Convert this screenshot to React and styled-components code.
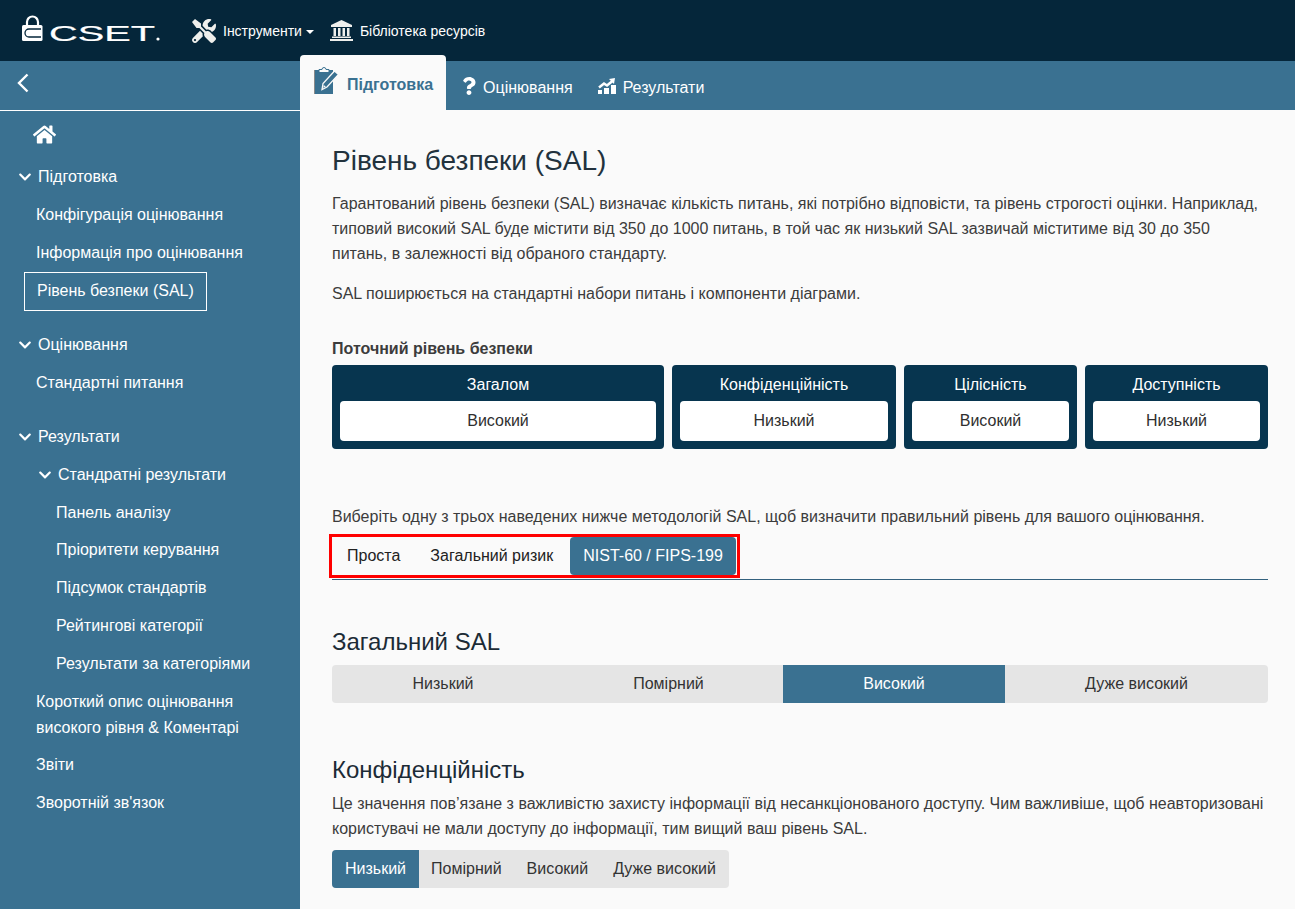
import React from "react";
import styled, { createGlobalStyle } from "styled-components";
import { FaTools, FaQuestion, FaHome, FaChevronDown } from "react-icons/fa";

const GlobalStyle = createGlobalStyle`
  html, body {
    margin: 0;
    padding: 0;
    background: #fafafa;
    font-family: "Liberation Sans", Arial, sans-serif;
    font-size: 16px;
    color: #3c3c3c;
  }
  * {
    box-sizing: border-box;
  }
`;

const navGroups = [
  {
    title: "Підготовка",
    items: [
      { label: "Конфігурація оцінювання" },
      { label: "Інформація про оцінювання" },
      { label: "Рівень безпеки (SAL)", active: true },
    ],
  },
  {
    title: "Оцінювання",
    items: [{ label: "Стандартні питання" }],
  },
];

const resultItems = ["Панель аналізу", "Пріоритети керування", "Підсумок стандартів", "Рейтингові категорії", "Результати за категоріями"];

const levels = [
  { title: "Загалом", value: "Високий" },
  { title: "Конфіденційність", value: "Низький" },
  { title: "Цілісність", value: "Високий" },
  { title: "Доступність", value: "Низький" },
];

function Logo() {
  return (
    <LogoSvg viewBox="0 0 140 36" width="140" height="36">
      <path d="M5 13V8a5.500 5.500 0 0 1 11 0v5" fill="none" stroke="#fff" strokeWidth="2.2" />
      <rect x="0" y="11" width="20.500" height="16" rx="1.500" fill="#fff" />
      <path d="M19 15H7a3.500 3.500 0 0 0 0 8h12" fill="none" stroke="#05263a" strokeWidth="1.300" />
      <text x="27" y="27" textLength="106" lengthAdjust="spacingAndGlyphs" fontFamily="Liberation Sans" fontSize="22" stroke="#fff" strokeWidth="0.2" fill="#fff">CSET</text>
      <circle cx="136" cy="25" r="1.600" fill="#fff" />
    </LogoSvg>
  );
}

function LibraryIcon() {
  return (
    <svg viewBox="0 0 23 21" width="23" height="21" fill="#efefec">
      <path d="M11.500 0L22 5v2H1V5z" />
      <path d="M3.500 8h2.500v8H3.500zM8 8h2.500v8H8zM12.500 8H15v8h-2.500zM17 8h2.500v8H17z" />
      <path d="M2 16.500h19V18H2zM0 19h23v2H0z" />
    </svg>
  );
}

function BackIcon() {
  return (
    <svg viewBox="0 0 12 20" width="12" height="20">
      <path d="M10.500 1.500L2 10l8.500 8.500" fill="none" stroke="#fff" strokeWidth="2.400" />
    </svg>
  );
}

function ClipboardIcon() {
  return (
    <svg viewBox="0 0 26 27" width="26" height="27">
      <path fill="#3a7191" d="M0 3h19v24H0z" />
      <path fill="#8a8a8a" d="M0 3h1v24H0z" />
      <path fill="#fafafa" stroke="#3a7191" strokeWidth="1" d="M5 5.500V2.500h3a2 2 0 0 1 4 0h3v3z" />
      <path fill="#3a7191" stroke="#fafafa" strokeWidth="1.300" d="M8 22.500l1-6L20.500 4l4 3.500L13 20z" />
      <path fill="#fafafa" d="M9.800 18l2 1.800-2.600 1z" />
    </svg>
  );
}

function ResultsIcon() {
  return (
    <svg viewBox="0 0 18 16" width="18" height="16" fill="#fff">
      <path d="M0 12h4v4H0zM6 10h5v6H6zM13 7h5v9h-5z" />
      <path d="M1 9.500l5-4 3 2 5.500-4.500" fill="none" stroke="#fff" strokeWidth="2.500" />
      <path d="M11 1l6-1-1 6z" />
    </svg>
  );
}

export default function App() {
  return (
    <>
      <GlobalStyle />
      <TopBar>
        <Logo />
        <TopLink>
          <FaTools size={24} />
          <TopLabel>Інструменти</TopLabel>
          <Caret />
        </TopLink>
        <TopLink>
          <LibraryIcon />
          <TopLabel>Бібліотека ресурсів</TopLabel>
        </TopLink>
      </TopBar>
      <Body>
        <Sidebar>
          <BackRow>
            <BackIcon />
          </BackRow>
          <HomeRow>
            <FaHome size={23} />
          </HomeRow>
          {navGroups.map((group) => (
            <NavGroup key={group.title}>
              <NavHead>
                <FaChevronDown size={14} />
                {group.title}
              </NavHead>
              {group.items.map((item) => (
                <NavItem key={item.label} $active={item.active}>
                  {item.label}
                </NavItem>
              ))}
            </NavGroup>
          ))}
          <NavHead>
            <FaChevronDown size={14} />
            Результати
          </NavHead>
          <SubHead>
            <FaChevronDown size={14} />
            Стандратні результати
          </SubHead>
          {resultItems.map((label) => (
            <SubItem key={label}>{label}</SubItem>
          ))}
          <WrapItem>Короткий опис оцінювання високого рівня &amp; Коментарі</WrapItem>
          <NavItem>Звіти</NavItem>
          <NavItem>Зворотній зв'язок</NavItem>
        </Sidebar>
        <Right>
          <TabBar>
            <MainTab $active $iconShift="-10px">
              <ClipboardIcon />
              Підготовка
            </MainTab>
            <MainTab $gap="5px">
              <FaQuestion size={18} />
              Оцінювання
            </MainTab>
            <MainTab>
              <ResultsIcon />
              Результати
            </MainTab>
          </TabBar>
          <Content>
            <Title>Рівень безпеки (SAL)</Title>
            <Text>
              Гарантований рівень безпеки (SAL) визначає кількість питань, які потрібно відповісти, та рівень строгості оцінки. Наприклад, типовий високий SAL буде містити від 350 до 1000 питань, в той час як низький SAL зазвичай міститиме від 30 до 350 питань, в залежності від обраного стандарту.
            </Text>
            <Text>SAL поширюється на стандартні набори питань і компоненти діаграми.</Text>
            <CurrentLabel>Поточний рівень безпеки</CurrentLabel>
            <Cards>
              {levels.map((level) => (
                <Card key={level.title}>
                  <CardTitle>{level.title}</CardTitle>
                  <CardValue>{level.value}</CardValue>
                </Card>
              ))}
            </Cards>
            <Hint>Виберіть одну з трьох наведених нижче методологій SAL, щоб визначити правильний рівень для вашого оцінювання.</Hint>
            <MethodRow>
              <MethodTabs>
                <MethodTab>Проста</MethodTab>
                <MethodTab>Загальний ризик</MethodTab>
                <MethodTab $active>NIST-60 / FIPS-199</MethodTab>
              </MethodTabs>
            </MethodRow>
            <SectionTitle $bottom="9px">Загальний SAL</SectionTitle>
            <Segments>
              <Segment>Низький</Segment>
              <Segment>Помірний</Segment>
              <Segment $active>Високий</Segment>
              <Segment>Дуже високий</Segment>
            </Segments>
            <SectionTitle $top="52px" $bottom="7px">Конфіденційність</SectionTitle>
            <Text $bottom="9px">
              Це значення пов’язане з важливістю захисту інформації від несанкціонованого доступу. Чим важливіше, щоб неавторизовані користувачі не мали доступу до інформації, тим вищий ваш рівень SAL.
            </Text>
            <SmallSegments>
              <SmallSegment $active>Низький</SmallSegment>
              <SmallSegment>Помірний</SmallSegment>
              <SmallSegment>Високий</SmallSegment>
              <SmallSegment>Дуже високий</SmallSegment>
            </SmallSegments>
          </Content>
        </Right>
      </Body>
    </>
  );
}

const TopBar = styled.header`
  height: 61px;
  background: #05263a;
  display: flex;
  align-items: center;
  padding-left: 22px;
  color: #fff;
`;

const LogoSvg = styled.svg`
  margin-right: 30px;
  margin-top: 2px;
`;

const TopLink = styled.div`
  display: flex;
  align-items: center;
  margin-right: 16px;
  font-size: 14px;
  svg {
    color: #efefec;
  }
`;

const TopLabel = styled.span`
  margin-left: 7px;
`;

const Caret = styled.span`
  width: 0;
  height: 0;
  margin-left: 4px;
  margin-top: 2px;
  border-left: 4px solid transparent;
  border-right: 4px solid transparent;
  border-top: 4px solid #fff;
`;

const Body = styled.div`
  display: flex;
  height: 848px;
`;

const Sidebar = styled.nav`
  width: 300px;
  flex: none;
  background: #3a7191;
  color: #fff;
`;

const BackRow = styled.div`
  height: 50px;
  border-bottom: 1px solid #fff;
  display: flex;
  align-items: center;
  padding: 0 0 6px 17px;
`;

const HomeRow = styled.div`
  height: 47.4px;
  display: flex;
  align-items: center;
  padding: 0 0 0 33px;
`;

const NavGroup = styled.div`
  margin-bottom: 16px;
`;

const NavHead = styled.div`
  height: 37.8px;
  display: flex;
  align-items: center;
  gap: 6px;
  padding-left: 18px;
`;

const SubHead = styled(NavHead)`
  padding-left: 38px;
`;

const NavItem = styled.div`
  height: 37.8px;
  display: flex;
  align-items: center;
  padding-left: ${(props) => (props.$active ? "12px" : "36px")};
  ${(props) =>
    props.$active &&
    `
    margin-left: 24px;
    width: 183px;
    border: 1px solid #fff;
    height: 38.8px;
  `}
`;

const SubItem = styled(NavItem)`
  padding-left: 56px;
`;

const WrapItem = styled.div`
  padding: 6px 40px 6px 36px;
  line-height: 25.8px;
`;

const Right = styled.main`
  flex: 1;
  min-width: 0;
`;

const TabBar = styled.div`
  height: 49px;
  background: #3a7191;
  display: flex;
  align-items: flex-end;
`;

const MainTab = styled.div`
  height: ${(props) => (props.$active ? "55px" : "49px")};
  padding: 5px ${(props) => (props.$active ? "13px" : "11px")} 0 14px;
  background: ${(props) => (props.$active ? "#fafafa" : "transparent")};
  color: ${(props) => (props.$active ? "#3a7191" : "#fff")};
  font-weight: ${(props) => (props.$active ? 700 : 400)};
  border-radius: 4px 4px 0 0;
  display: flex;
  align-items: center;
  gap: ${(props) => props.$gap || "7px"};
  svg {
    margin-top: ${(props) => props.$iconShift || "-4px"};
  }
`;

const Content = styled.div`
  padding: 34px 27px 0 32px;
`;

const Title = styled.h1`
  margin: 0 0 13px;
  font-size: 28px;
  font-weight: 400;
  line-height: 34px;
  color: #22323d;
`;

const Text = styled.p`
  margin: 0 0 ${(props) => props.$bottom || "15px"};
  line-height: 25px;
  color: #3c3c3c;
`;

const CurrentLabel = styled.div`
  margin-top: 30px;
  font-weight: 700;
  line-height: 25px;
`;

const Cards = styled.div`
  display: grid;
  grid-template-columns: 332px 224px 173px 183px;
  gap: 8px;
  margin-top: 4px;
`;

const Card = styled.div`
  background: #07354f;
  border-radius: 4px;
  padding: 8px;
  height: 84px;
`;

const CardTitle = styled.div`
  color: #fff;
  text-align: center;
  line-height: 24px;
  padding-bottom: 4px;
`;

const CardValue = styled.div`
  background: #fff;
  border-radius: 4px;
  height: 40px;
  display: flex;
  align-items: center;
  justify-content: center;
  color: #2f2f2f;
`;

const Hint = styled.p`
  margin: 55px 0 0;
  line-height: 25px;
`;

const MethodRow = styled.div`
  margin-top: 8px;
  border-bottom: 1px solid #33617e;
  height: 43px;
  display: flex;
  align-items: flex-start;
`;

const MethodTabs = styled.div`
  display: flex;
  height: 38px;
  padding-right: 1px;
  outline: 3px solid #f00;
`;

const MethodTab = styled.div`
  padding: ${(props) => (props.$active ? "0 13px" : "0 15px")};
  display: flex;
  align-items: center;
  border-radius: 4px;
  background: ${(props) => (props.$active ? "#3a7191" : "transparent")};
  color: ${(props) => (props.$active ? "#fff" : "#222")};
  margin-left: ${(props) => (props.$active ? "2px" : "0")};
`;

const SectionTitle = styled.h2`
  margin: ${(props) => props.$top || "47px"} 0 ${(props) => props.$bottom};
  font-size: 24px;
  font-weight: 400;
  line-height: 29px;
  color: #1c2b36;
`;

const Segments = styled.div`
  display: grid;
  grid-template-columns: 222fr 229fr 222fr 263fr;
  background: #e5e5e5;
  border-radius: 4px;
  overflow: hidden;
  height: 38px;
`;

const Segment = styled.div`
  padding: 0 12px;
  display: flex;
  align-items: center;
  justify-content: center;
  background: ${(props) => (props.$active ? "#3a7191" : "transparent")};
  color: ${(props) => (props.$active ? "#fff" : "#333")};
`;

const SmallSegments = styled(Segments)`
  display: inline-flex;
`;

const SmallSegment = styled(Segment)`
  padding: 0 13px 0 ${(props) => (props.$active ? "13px" : "12px")};
`;
